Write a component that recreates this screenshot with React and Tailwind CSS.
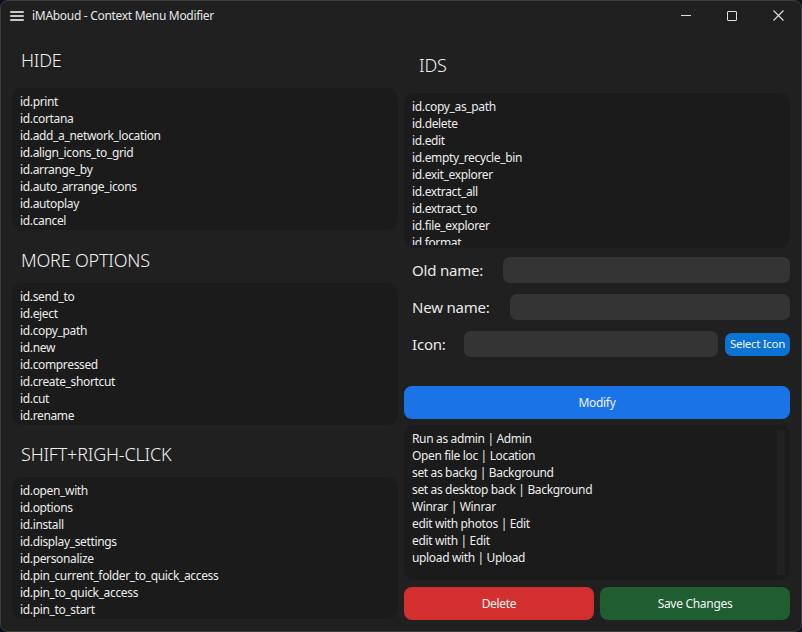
import React from "react";

const hide = ["id.print","id.cortana","id.add_a_network_location","id.align_icons_to_grid","id.arrange_by","id.auto_arrange_icons","id.autoplay","id.cancel","id.cast_to_device"];
const more = ["id.send_to","id.eject","id.copy_path","id.new","id.compressed","id.create_shortcut","id.cut","id.rename","id.share"];
const shift = ["id.open_with","id.options","id.install","id.display_settings","id.personalize","id.pin_current_folder_to_quick_access","id.pin_to_quick_access","id.pin_to_start","id.print"];
const ids = ["id.copy_as_path","id.delete","id.edit","id.empty_recycle_bin","id.exit_explorer","id.extract_all","id.extract_to","id.file_explorer","id.format","id.give_access_to"];
const mods = ["Run as admin | Admin","Open file loc | Location","set as backg | Background","set as desktop back | Background","Winrar | Winrar","edit with photos | Edit","edit with | Edit","upload with | Upload"];

function Item({ children }) {
  return <div className="h-[17px] leading-[17px] text-[12px] tracking-[-0.35px] text-[#ececec] whitespace-nowrap">{children}</div>;
}

function ListBox({ items, h }) {
  return (
    <div className={`${h} bg-[#1b1b1b] rounded-[10px] overflow-hidden pl-2 pt-[5px]`}>
      {items.map((t, i) => (
        <Item key={i}>{t}</Item>
      ))}
    </div>
  );
}

function Header({ children, cls }) {
  return <div className={`text-[18px] leading-[24px] font-light text-[#f0f0f0] pl-[9px] tracking-[-0.2px] ${cls}`}>{children}</div>;
}

export default function App() {
  return (
    <div className="w-[802px] h-[632px] bg-[#0d1020]" style={{ fontFamily: '"Noto Sans", "Open Sans", sans-serif' }}>
      <div className="w-full h-full bg-[#202020] border border-[#3d3d3d] rounded-[8px] flex flex-col overflow-hidden">
        {/* Title bar */}
        <div className="h-[29px] flex items-center shrink-0">
          <div className="ml-[9px] w-[14px] flex flex-col gap-[2px]">
            <div className="h-[2px] rounded-full bg-[#c8c8c8]" />
            <div className="h-[2px] rounded-full bg-[#c8c8c8]" />
            <div className="h-[2px] rounded-full bg-[#c8c8c8]" />
          </div>
          <div className="ml-[8px] text-[12px] tracking-[-0.3px] text-[#e6e6e6]">iMAboud - Context Menu Modifier</div>
          <div className="ml-auto flex items-center h-full">
            <div className="w-[46px] h-full flex items-center justify-center">
              <div className="w-[10px] h-[1px] bg-[#e0e0e0]" />
            </div>
            <div className="w-[46px] h-full flex items-center justify-center">
              <div className="w-[10px] h-[10px] border border-[#e0e0e0] rounded-[1px]" />
            </div>
            <div className="w-[46px] h-full flex items-center justify-center">
              <svg width="11" height="11" viewBox="0 0 11 11"><path d="M0.5 0.5L10.5 10.5M10.5 0.5L0.5 10.5" stroke="#e0e0e0" strokeWidth="1.1" /></svg>
            </div>
          </div>
        </div>

        {/* Content */}
        <div className="flex-1 grid grid-cols-2 gap-[6px] pl-[11px] pr-[11px]">
          {/* Left */}
          <div className="flex flex-col">
            <Header cls="mt-[18px] mb-[16px]">HIDE</Header>
            <ListBox items={hide} h="h-[142px]" />
            <Header cls="mt-[18px] mb-[11px]">MORE OPTIONS</Header>
            <ListBox items={more} h="h-[142px]" />
            <Header cls="mt-[17px] mb-[11px]">SHIFT+RIGH-CLICK</Header>
            <ListBox items={shift} h="h-[142px]" />
          </div>

          {/* Right */}
          <div className="flex flex-col">
            <Header cls="mt-[23px] mb-[16px] pl-[15px]">IDS</Header>
            <div className="h-[155px] bg-[#1b1b1b] rounded-[10px] pt-[5px] pb-[3px]">
              <div className="h-full overflow-hidden pl-2">
                {ids.map((t, i) => (
                  <Item key={i}>{t}</Item>
                ))}
              </div>
            </div>

            <div className="mt-[9px] h-[26px] flex items-center">
              <div className="pl-2 text-[15px] tracking-[-0.2px] text-[#e8e8e8] w-[99px] whitespace-nowrap">Old name:</div>
              <div className="flex-1 h-full bg-[#343434] rounded-[7px]" />
            </div>
            <div className="mt-[11px] h-[26px] flex items-center">
              <div className="pl-2 text-[15px] tracking-[-0.2px] text-[#e8e8e8] w-[106px] whitespace-nowrap">New name:</div>
              <div className="flex-1 h-full bg-[#343434] rounded-[7px]" />
            </div>
            <div className="mt-[11px] h-[26px] flex items-center">
              <div className="pl-2 text-[15px] tracking-[-0.2px] text-[#e8e8e8] w-[60px] whitespace-nowrap">Icon:</div>
              <div className="flex-1 h-full bg-[#343434] rounded-[7px]" />
              <button className="ml-[7px] w-[65px] h-[23px] bg-[#0b74d3] rounded-[7px] text-[11.5px] tracking-[-0.3px] text-[#f2f2f2] flex items-center justify-center whitespace-nowrap">Select Icon</button>
            </div>

            <button className="mt-[29px] h-[33px] bg-[#1b73e8] rounded-[8px] text-[12px] tracking-[-0.3px] text-[#eef3ff] flex items-center justify-center">Modify</button>

            <div className="mt-[6px] h-[155px] bg-[#1b1b1b] rounded-[10px] flex">
              <div className="flex-1 pl-2 pt-[5px] overflow-hidden">
                {mods.map((t, i) => (
                  <Item key={i}>{t}</Item>
                ))}
              </div>
              <div className="w-[8px] mr-[5px] my-[5px] bg-[#212121]" />
            </div>

            <div className="mt-[7px] grid grid-cols-2 gap-[6px]">
              <button className="h-[33px] bg-[#d32f2f] rounded-[8px] text-[12px] tracking-[-0.3px] text-[#f5f5f5] flex items-center justify-center">Delete</button>
              <button className="h-[33px] bg-[#1e5e30] rounded-[8px] text-[12px] tracking-[-0.3px] text-[#f5f5f5] flex items-center justify-center">Save Changes</button>
            </div>
          </div>
        </div>
      </div>
    </div>
  );
}
